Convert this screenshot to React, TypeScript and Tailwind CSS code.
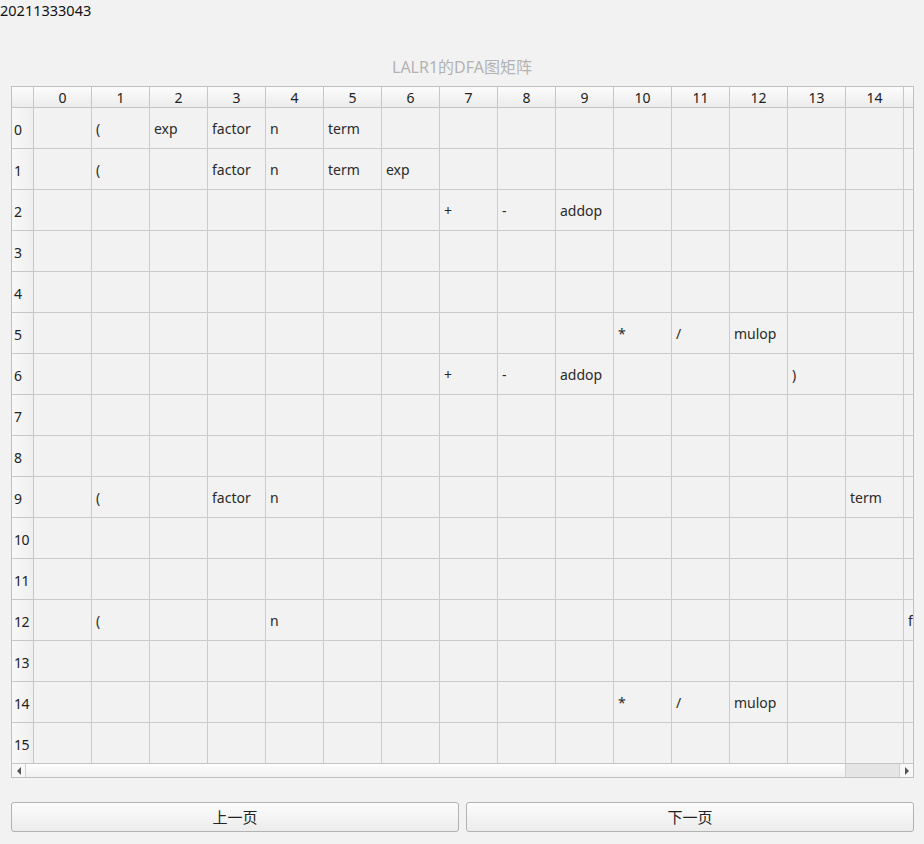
import React from 'react';

const FONT = { fontFamily: '"Noto Sans", "Noto Sans CJK SC", sans-serif' };

const COLS = 16;
const ROWS = 16;

// row -> { col: text }
const cells: Record<number, Record<number, string>> = {
  0: { 1: '(', 2: 'exp', 3: 'factor', 4: 'n', 5: 'term' },
  1: { 1: '(', 3: 'factor', 4: 'n', 5: 'term', 6: 'exp' },
  2: { 7: '+', 8: '-', 9: 'addop' },
  5: { 10: '*', 11: '/', 12: 'mulop' },
  6: { 7: '+', 8: '-', 9: 'addop', 13: ')' },
  9: { 1: '(', 3: 'factor', 4: 'n', 14: 'term' },
  12: { 1: '(', 4: 'n', 15: 'factor' },
  14: { 10: '*', 11: '/', 12: 'mulop' },
};

function HeaderRow() {
  return (
    <div className="flex h-[21px] shrink-0">
      <div className="w-[22px] shrink-0 border-r border-b border-[#c6c6c6] bg-gradient-to-b from-[#fcfcfc] to-[#ececec]" />
      {Array.from({ length: COLS }, (_, c) => (
        <div
          key={c}
          className="w-[58px] shrink-0 flex items-center justify-center border-r border-b border-[#c6c6c6] bg-gradient-to-b from-[#fcfcfc] to-[#ececec] text-[14px] text-[#222]"
        >
          {c < 15 ? c : ''}
        </div>
      ))}
    </div>
  );
}

function DataRow({ r }: { r: number }) {
  const row = cells[r] || {};
  return (
    <div className="flex h-[41px] shrink-0">
      <div className="w-[22px] shrink-0 flex items-center pl-[2px] pt-[2px] border-r border-b border-[#c6c6c6] bg-gradient-to-r from-[#f8f8f8] to-[#efefef] text-[14px] text-[#222] tracking-[-0.5px]">
        {r}
      </div>
      {Array.from({ length: COLS }, (_, c) => (
        <div
          key={c}
          className="w-[58px] shrink-0 flex items-center pl-[4px] pt-[1px] border-r border-b border-[#cbcbcb] text-[14px] text-[#2a2a2a] whitespace-nowrap overflow-hidden"
        >
          {row[c] ?? ''}
        </div>
      ))}
    </div>
  );
}

function ScrollBar() {
  return (
    <div className="flex h-[14px] shrink-0 border-t border-[#c6c6c6]">
      <div className="w-[14px] shrink-0 flex items-center justify-center border-r border-[#cfcfcf] bg-[#f7f7f7]">
        <svg width="6" height="8" viewBox="0 0 6 8">
          <path d="M5 0 L1 4 L5 8 Z" fill="#555" />
        </svg>
      </div>
      <div className="flex-1 bg-gradient-to-b from-[#fdfdfd] to-[#f0f0f0]" />
      <div className="w-[55px] shrink-0 bg-[#e5e5e5] border-l border-r border-[#cfcfcf]" />
      <div className="w-[13px] shrink-0 flex items-center justify-center bg-[#f7f7f7]">
        <svg width="6" height="8" viewBox="0 0 6 8">
          <path d="M1 0 L5 4 L1 8 Z" fill="#555" />
        </svg>
      </div>
    </div>
  );
}

export default function App() {
  return (
    <div className="w-[924px] h-[844px] bg-[#f2f2f2] flex flex-col overflow-hidden" style={FONT}>
      <div className="h-[20px] leading-[20px] text-[14.5px] text-[#111]">20211333043</div>
      <div className="mt-[37px] h-[20px] leading-[20px] text-center text-[16px] text-[#b3b3b3]">
        LALR1的DFA图矩阵
      </div>
      <div className="mt-[9px] ml-[11px] w-[903px] h-[692px] border border-[#c0c0c0] flex flex-col overflow-hidden">
        <div className="flex-1 flex flex-col overflow-hidden">
          <HeaderRow />
          {Array.from({ length: ROWS }, (_, r) => (
            <DataRow key={r} r={r} />
          ))}
        </div>
        <ScrollBar />
      </div>
      <div className="mt-[24px] ml-[11px] w-[903px] flex gap-[7px]">
        {['上一页', '下一页'].map((t) => (
          <button
            key={t}
            className="flex-1 h-[30px] rounded-[3px] border border-[#b2b2b2] bg-gradient-to-b from-[#fcfcfc] to-[#ececec] text-[15px] text-[#222]"
          >
            {t}
          </button>
        ))}
      </div>
    </div>
  );
}
